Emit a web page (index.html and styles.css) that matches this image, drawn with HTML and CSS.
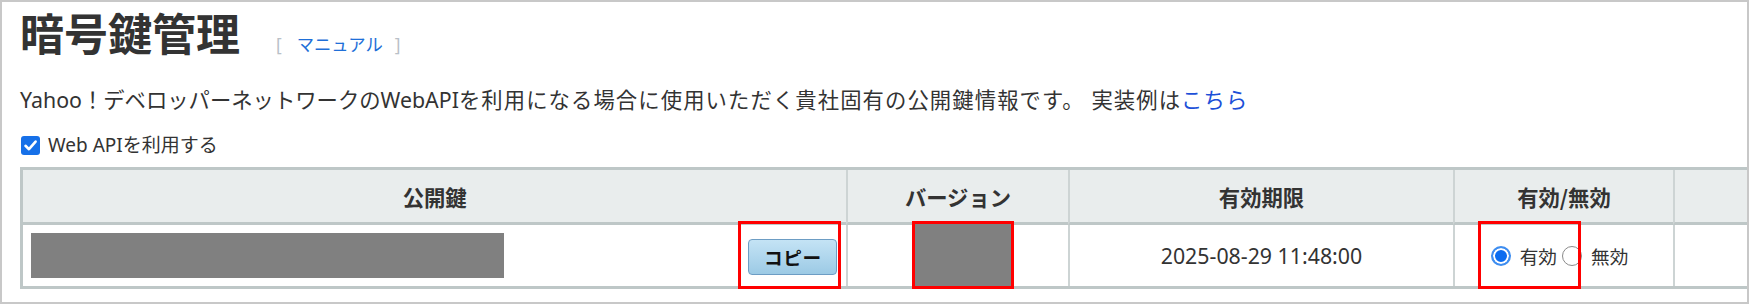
FILE: index.html
```html
<!DOCTYPE html>
<html lang="ja">
<head>
<meta charset="utf-8">
<title>暗号鍵管理</title>
<link rel="stylesheet" href="styles.css">
</head>
<body>
<div class="frame">
  <div class="page-head">
    <h1 class="title">暗号鍵管理</h1>
    <span class="manual"><span class="bracket">[</span><a href="#" class="manual-link">マニュアル</a><span class="bracket">]</span></span>
  </div>
  <p class="desc">Yahoo！デベロッパーネットワークのWebAPI<span class="desc-rest">を利用になる場合に使用いただく貴社固有の公開鍵情報です。 実装例は<a href="#" class="link">こちら</a></span></p>
  <label class="use-api"><span class="checkbox"><svg viewBox="0 0 19 19" width="19" height="19"><path d="M4.5 9.8 L8 13.2 L14.6 5.6" fill="none" stroke="#fff" stroke-width="2.6" stroke-linecap="round" stroke-linejoin="round"/></svg></span><span>Web APIを利用する</span></label>
  <table class="keys">
    <thead>
      <tr>
        <th class="c-key">公開鍵</th>
        <th class="c-ver">バージョン</th>
        <th class="c-exp">有効期限</th>
        <th class="c-state">有効/無効</th>
        <th class="c-extra"></th>
      </tr>
    </thead>
    <tbody>
      <tr>
        <td class="key-cell">
          <div class="key-row"><div class="mask mask-key"></div><button class="copy-btn" type="button">コピー</button></div>
          <span class="annot annot-copy"></span>
        </td>
        <td class="ver-cell">
          <div class="mask mask-ver"></div>
          <span class="annot annot-ver"></span>
        </td>
        <td class="exp-cell">2025-08-29 11:48:00</td>
        <td class="state-cell">
          <div class="radios">
            <label class="radio"><input type="radio" name="state" class="radio-input" checked>有効</label>
            <label class="radio"><input type="radio" name="state" class="radio-input">無効</label>
          </div>
          <span class="annot annot-state"></span>
        </td>
        <td class="extra-cell"></td>
      </tr>
    </tbody>
  </table>
</div>
</body>
</html>
```

FILE: styles.css
```css
html, body {
  margin: 0;
  padding: 0;
  background: #fff;
}

body {
  font-family: "Noto Sans", "Noto Sans CJK JP", sans-serif;
  color: #333;
}

.frame {
  box-sizing: border-box;
  width: 1749px;
  height: 304px;
  border: 2px solid #c8c8c8;
  padding: 9px 0 0 18px;
  overflow: hidden;
}

.page-head {
  display: flex;
  align-items: flex-end;
}

.title {
  margin: 0;
  font-size: 44px;
  line-height: 43px;
  font-weight: bold;
  color: #333;
  font-family: "Noto Sans CJK JP", sans-serif;
}

.manual {
  display: flex;
  align-items: center;
  margin-left: 36px;
  margin-bottom: 1px;
  font-size: 17.33px;
  line-height: 18px;
  font-family: "Noto Sans CJK JP", sans-serif;
}

.bracket {
  color: #b9c0c7;
  font-family: "Noto Sans", sans-serif;
}

.manual-link {
  color: #1f6fd8;
  text-decoration: none;
  margin: 0 12px 0 15px;
}

.desc {
  margin: 35px 0 0;
  font-size: 21.33px;
  line-height: 21px;
  color: #333;
  white-space: nowrap;
}

.desc-rest {
  letter-spacing: 1.1px;
}

.link {
  color: #1c4fd8;
  text-decoration: none;
}

.use-api {
  display: flex;
  align-items: center;
  gap: 8px;
  margin-top: 26px;
  font-size: 19px;
  line-height: 19px;
  color: #333;
}

.checkbox {
  display: block;
  width: 19px;
  height: 19px;
  border-radius: 3px;
  background: #1670e8;
  margin-left: 1px;
}

.checkbox svg {
  display: block;
}

.keys {
  margin-top: 12px;
  table-layout: fixed;
  width: 1853px;
  border-collapse: separate;
  border-spacing: 0;
  border: 3px solid #bec7c7;
  border-right: 0;
}

.keys th,
.keys td {
  box-sizing: content-box;
  padding: 0;
  border-left: 2px solid #cdd4d4;
}

.keys th:first-child,
.keys td:first-child {
  border-left: 0;
}

.keys th {
  height: 52px;
  background: #e9eded;
  border-bottom: 3px solid #bec7c7;
  font-size: 21.33px;
  font-weight: bold;
  color: #333;
  text-align: center;
  vertical-align: middle;
  font-family: "Noto Sans CJK JP", sans-serif;
}

.keys th.c-key { width: 822px; }
.keys th.c-ver { width: 219px; }
.keys th.c-exp { width: 383px; }
.keys th.c-state { width: 217px; }
.keys th.c-extra { width: 198px; }

.keys td {
  height: 61px;
  vertical-align: middle;
  position: relative;
}

.key-row {
  display: flex;
  align-items: center;
  justify-content: space-between;
  height: 61px;
  padding: 0 9px 0 8px;
}

.mask {
  background: #808080;
}

.mask-key {
  width: 473px;
  height: 45px;
}

.copy-btn {
  width: 89px;
  height: 36px;
  margin-top: 3px;
  padding: 0;
  border: 1px solid #6d9dc4;
  border-radius: 4px;
  background: linear-gradient(#c4e3f5, #9ccae5);
  font-family: "Noto Sans CJK JP", sans-serif;
  font-size: 18.67px;
  font-weight: bold;
  color: #111;
  line-height: 34px;
  letter-spacing: 0.5px;
}

.mask-ver {
  width: 96px;
  height: 62px;
  margin: -1px 0 0 67px;
}

.exp-cell {
  text-align: center;
  font-size: 21.33px;
  color: #333;
}

.radios {
  display: flex;
  justify-content: center;
  align-items: center;
  gap: 5px;
  padding-right: 9px;
}

.radio {
  display: flex;
  align-items: center;
  gap: 9px;
  font-size: 18.67px;
  line-height: 20px;
  color: #333;
  font-family: "Noto Sans CJK JP", sans-serif;
}

.radio-input {
  appearance: none;
  -webkit-appearance: none;
  box-sizing: border-box;
  width: 20px;
  height: 20px;
  margin: 0;
  border-radius: 50%;
  border: 1.5px solid #8a8a8a;
  background: #fff;
}

.radio-input:checked {
  border: 2px solid #3f8ef0;
  background: #0b6cf0;
  box-shadow: inset 0 0 0 2px #fff;
}

.annot {
  position: absolute;
  top: -4px;
  box-sizing: border-box;
  height: 68px;
  border: 3px solid #ff0000;
}

.annot-copy {
  left: 715px;
  width: 103px;
}

.annot-ver {
  left: 64px;
  width: 102px;
}

.annot-state {
  left: 23px;
  width: 103px;
}
```
